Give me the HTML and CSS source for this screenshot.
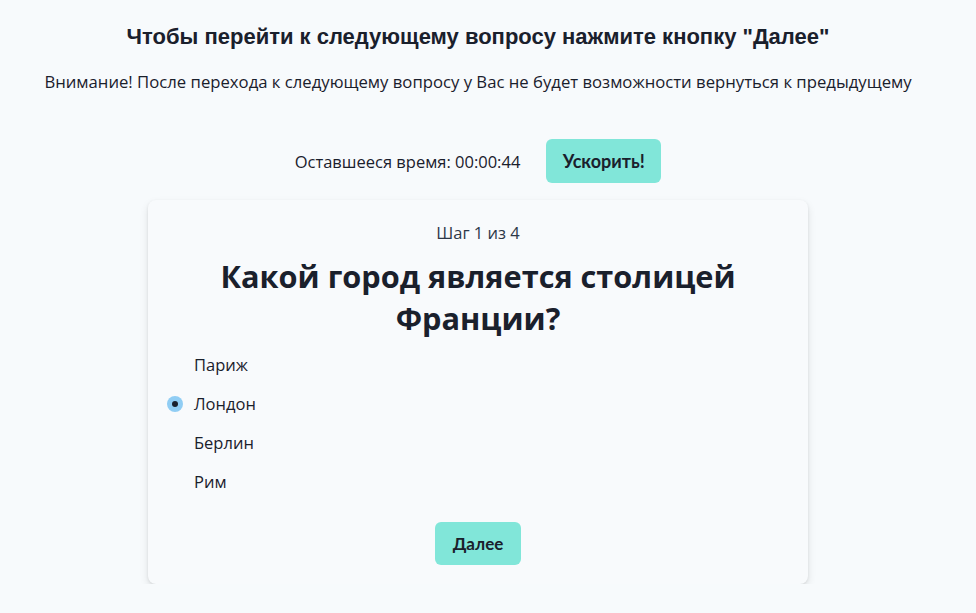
FILE: index.html
```html
<!DOCTYPE html>
<html lang="ru">
<head>
<meta charset="utf-8">
<link rel="stylesheet" href="styles.css">
</head>
<body>
<div class="page">
  <h1 class="title">Чтобы перейти к следующему вопросу нажмите кнопку "Далее"</h1>
  <p class="warning">Внимание! После перехода к следующему вопросу у Вас не будет возможности вернуться к предыдущему</p>
  <div class="timer">
    <span class="timer-text">Оставшееся время: 00:00:44</span>
    <button class="btn btn-speed">Ускорить!</button>
  </div>
  <div class="card">
    <div class="step">Шаг 1 из 4</div>
    <h2 class="question">Какой город является столицей Франции?</h2>
    <div class="options">
      <label class="option"><input type="radio" name="q" class="radio"><span>Париж</span></label>
      <label class="option"><input type="radio" name="q" class="radio" checked><span>Лондон</span></label>
      <label class="option"><input type="radio" name="q" class="radio"><span>Берлин</span></label>
      <label class="option"><input type="radio" name="q" class="radio"><span>Рим</span></label>
    </div>
    <div class="actions">
      <button class="btn btn-next">Далее</button>
    </div>
  </div>
</div>
</body>
</html>
```
FILE: styles.css
```css
html, body {
  margin: 0;
  padding: 0;
  background: #f7fafc;
  color: #1a202c;
}
.page {
  width: 956px;
  display: flex;
  flex-direction: column;
  align-items: center;
  padding-top: 25px;
}
.title {
  font-family: "Liberation Sans", Arial, sans-serif;
  font-weight: bold;
  font-size: 22px;
  line-height: 24px;
  margin: 0;
  color: #1a202c;
}
.warning {
  font-family: "Open Sans", sans-serif;
  font-size: 16.7px;
  line-height: 22px;
  margin: 22px 0 0 0;
  color: #1a202c;
  white-space: nowrap;
}
.timer {
  display: flex;
  align-items: center;
  gap: 26px;
  margin-top: 46px;
}
.timer-text {
  font-family: "Open Sans", sans-serif;
  font-size: 16.5px;
}
.btn {
  font-family: Lato, sans-serif;
  font-weight: bold;
  font-size: 18px;
  color: #1a202c;
  background: #81e6d9;
  border: none;
  border-radius: 6px;
  cursor: pointer;
  padding: 0;
}
.btn-speed {
  width: 115px;
  height: 44px;
}
.card {
  margin-top: 17px;
  width: 660px;
  box-sizing: border-box;
  background: #f8fafc;
  border-radius: 8px;
  box-shadow: 0 4px 8px rgba(0, 0, 0, 0.1), 0 1px 3px rgba(0, 0, 0, 0.08);
  padding: 22px 18px 19px;
  display: flex;
  flex-direction: column;
}
.step {
  text-align: center;
  font-family: "Open Sans", sans-serif;
  font-size: 16.5px;
  line-height: 22px;
  color: #2d3748;
}
.question {
  text-align: center;
  font-family: "Open Sans", sans-serif;
  font-weight: bold;
  font-size: 30.7px;
  line-height: 42px;
  margin: 11px 0 0;
  padding: 0 40px;
}
.options {
  display: flex;
  flex-direction: column;
  margin-top: 6px;
}
.option {
  display: flex;
  align-items: center;
  gap: 11px;
  height: 39px;
  font-family: "Open Sans", sans-serif;
  font-size: 16.5px;
  color: #1a202c;
}
.radio {
  appearance: none;
  -webkit-appearance: none;
  width: 16px;
  height: 16px;
  margin: 0 0 0 1px;
  border-radius: 50%;
  background: transparent;
  position: relative;
}
.radio:checked {
  background: #90cdf4;
}
.radio:checked::after {
  content: "";
  position: absolute;
  left: 5px;
  top: 5px;
  width: 6px;
  height: 6px;
  border-radius: 50%;
  background: #1a202c;
}
.actions {
  display: flex;
  justify-content: center;
  margin-top: 21px;
}
.btn-next {
  width: 86px;
  height: 43px;
  font-size: 17px;
}
```
